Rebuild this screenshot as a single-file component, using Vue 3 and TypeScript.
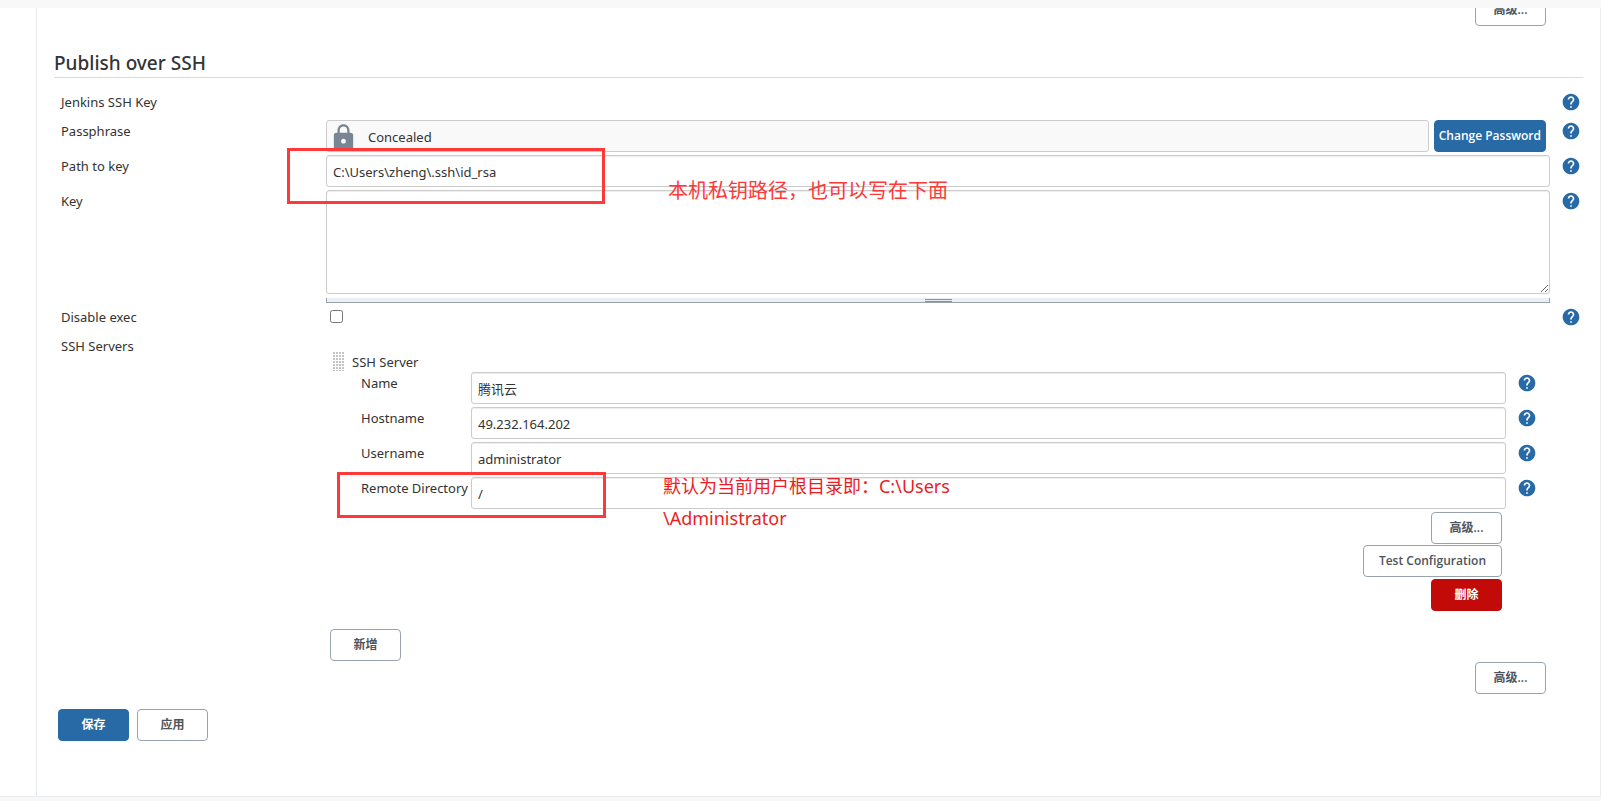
<script setup lang="ts">
import { reactive, ref } from 'vue'

interface ServerField {
  id: string
  label: string
  value: string
  marked?: boolean
}

const helpPath =
  'M12 2C6.48 2 2 6.48 2 12s4.48 10 10 10 10-4.48 10-10S17.52 2 12 2zm1 17h-2v-2h2v2zm2.07-7.75l-.9.92C13.45 12.9 13 13.5 13 15h-2v-.5c0-1.1.45-2.1 1.17-2.83l1.24-1.26c.37-.36.59-.86.59-1.41 0-1.1-.9-2-2-2s-2 .9-2 2H8c0-2.21 1.79-4 4-4s4 1.79 4 4c0 .88-.36 1.68-.93 2.25z'

const keyPath = ref('C:\\Users\\zheng\\.ssh\\id_rsa')
const key = ref('')
const disableExec = ref(false)

const serverFields = reactive<ServerField[]>([
  { id: 'server-name', label: 'Name', value: '腾讯云' },
  { id: 'server-hostname', label: 'Hostname', value: '49.232.164.202' },
  { id: 'server-username', label: 'Username', value: 'administrator' },
  { id: 'server-remote', label: 'Remote Directory', value: '/', marked: true },
])
</script>

<template>
  <div class="page">
    <header class="topbar"></header>
    <main class="main">
      <form class="config" @submit.prevent>
        <div class="actions previous">
          <button type="button" class="btn">高级...</button>
        </div>

        <h2 class="title">Publish over SSH</h2>

        <div class="row short">
          <span class="label">Jenkins SSH Key</span>
          <div></div>
          <button type="button" class="help" aria-label="Jenkins SSH Key">
            <svg viewBox="0 0 24 24"><path :d="helpPath" /></svg>
          </button>
        </div>

        <div class="row">
          <span class="label">Passphrase</span>
          <div class="secret">
            <div class="concealed">
              <svg class="lock" viewBox="0 0 24 24">
                <path
                  d="M18 8h-1V6c0-2.76-2.24-5-5-5S7 3.24 7 6v2H6c-1.1 0-2 .9-2 2v10c0 1.1.9 2 2 2h12c1.1 0 2-.9 2-2V10c0-1.1-.9-2-2-2zm-6 9c-1.1 0-2-.9-2-2s.9-2 2-2 2 .9 2 2-.9 2-2 2zm3.1-9H8.9V6c0-1.71 1.39-3.1 3.1-3.1 1.71 0 3.1 1.39 3.1 3.1v2z"
                />
              </svg>
              <span>Concealed</span>
            </div>
            <button type="button" class="btn primary compact">Change Password</button>
          </div>
          <button type="button" class="help" aria-label="Passphrase">
            <svg viewBox="0 0 24 24"><path :d="helpPath" /></svg>
          </button>
        </div>

        <div class="row">
          <label class="label" for="key-path">Path to key</label>
          <div class="control">
            <input id="key-path" v-model="keyPath" class="field" type="text" />
            <div class="mark mark-path"></div>
            <p class="note note-path">本机私钥路径，也可以写在下面</p>
          </div>
          <button type="button" class="help" aria-label="Path to key">
            <svg viewBox="0 0 24 24"><path :d="helpPath" /></svg>
          </button>
        </div>

        <div class="row tall">
          <label class="label" for="key">Key</label>
          <div>
            <textarea id="key" v-model="key" class="field area"></textarea>
            <div class="resizer"><span class="grip"></span></div>
          </div>
          <button type="button" class="help" aria-label="Key">
            <svg viewBox="0 0 24 24"><path :d="helpPath" /></svg>
          </button>
        </div>

        <div class="row short">
          <label class="label" for="disable-exec">Disable exec</label>
          <div><input id="disable-exec" v-model="disableExec" class="check" type="checkbox" /></div>
          <button type="button" class="help" aria-label="Disable exec">
            <svg viewBox="0 0 24 24"><path :d="helpPath" /></svg>
          </button>
        </div>

        <div class="row wide">
          <span class="label">SSH Servers</span>
          <div class="servers">
            <div class="server-head">
              <span class="drag"></span>
              <span>SSH Server</span>
            </div>
            <div class="server">
              <div v-for="f in serverFields" :key="f.id" class="server-row">
                <label class="server-label" :for="f.id">{{ f.label }}</label>
                <div class="control">
                  <input :id="f.id" v-model="f.value" class="field" type="text" />
                  <template v-if="f.marked">
                    <div class="mark mark-remote"></div>
                    <p class="note note-remote">默认为当前用户根目录即：C:\Users<br />\Administrator</p>
                  </template>
                </div>
                <button type="button" class="help" :aria-label="f.label">
                  <svg viewBox="0 0 24 24"><path :d="helpPath" /></svg>
                </button>
              </div>
              <div class="actions stacked">
                <button type="button" class="btn">高级...</button>
                <button type="button" class="btn">Test Configuration</button>
                <button type="button" class="btn danger">删除</button>
              </div>
            </div>
            <button type="button" class="btn add">新增</button>
          </div>
        </div>

        <div class="actions">
          <button type="button" class="btn">高级...</button>
        </div>

        <div class="footer-actions">
          <button type="submit" class="btn primary">保存</button>
          <button type="button" class="btn">应用</button>
        </div>
      </form>
    </main>
    <footer class="bottombar"></footer>
  </div>
</template>

<style>
body {
  margin: 0;
}
</style>

<style scoped>
.page {
  box-sizing: border-box;
  min-height: 100vh;
  display: flex;
  flex-direction: column;
  background: #fff;
  color: #333;
  font-family: 'Noto Sans', 'Noto Sans CJK SC', sans-serif;
  font-size: 13px;
  line-height: 22px;
}
.page * {
  box-sizing: border-box;
}
.topbar {
  height: 8px;
  background: #f8f8f8;
}
.bottombar {
  height: 5px;
  background: #f8f8f8;
  border-top: 1px solid #e9ecef;
}
.main {
  flex: 1;
  margin-left: 36px;
  padding: 0 17px;
  border-left: 1px solid #e6eaef;
  border-right: 1px solid #eee;
  overflow: hidden;
}
.actions {
  display: flex;
  justify-content: flex-end;
  padding-right: 37px;
}
.previous {
  margin-top: -14px;
}
.stacked {
  flex-direction: column;
  align-items: flex-end;
  gap: 1px;
}
.title {
  margin: 23px 0 13px;
  border-bottom: 1px solid #dcdcdc;
  font-size: 19px;
  font-weight: 500;
  line-height: 28px;
}
.row {
  display: grid;
  grid-template-columns: 272px minmax(0, 1fr) 33px;
  align-items: start;
  min-height: 35px;
}
.short {
  min-height: 29px;
}
.tall {
  min-height: 116px;
}
.wide {
  grid-template-columns: 272px minmax(0, 1fr);
}
.label {
  padding-left: 7px;
}
.help {
  justify-self: end;
  display: flex;
  align-items: center;
  height: 22px;
  margin: 0 2px 0 0;
  padding: 0;
  border: 0;
  background: none;
  cursor: pointer;
}
.help svg {
  width: 20px;
  height: 20px;
  fill: #286aa5;
}
.control {
  position: relative;
}
.field {
  display: block;
  width: 100%;
  height: 32px;
  margin: 0;
  padding: 1px 6px 0;
  border: 1px solid #ccc;
  border-radius: 3px;
  background: #fff;
  box-shadow: inset 0 1px 1px rgba(0, 0, 0, 0.075);
  color: #333;
  font: inherit;
}
.area {
  height: 104px;
  resize: vertical;
}
.resizer {
  display: flex;
  justify-content: center;
  height: 5px;
  margin-top: 4px;
  border: solid #98a3ad;
  border-width: 0 1px 1px;
  background: #eaeff2;
}
.grip {
  width: 27px;
  height: 3px;
  margin-top: 1px;
  border: solid #8a8f8f;
  border-width: 1px 0;
  background: #eaeff2;
}
.secret {
  display: flex;
  gap: 5px;
  padding-right: 4px;
}
.concealed {
  flex: 1;
  display: flex;
  align-items: center;
  gap: 10px;
  height: 32px;
  padding: 2px 2px 0;
  border: 1px solid #ccc;
  border-radius: 3px;
  background: #f9f9f9;
}
.lock {
  width: 29px;
  height: 29px;
  fill: #788594;
}
.check {
  display: block;
  width: 13px;
  height: 13px;
  margin: 4px 0 0 4px;
}
.servers {
  padding-top: 16px;
}
.server-head {
  display: flex;
  align-items: flex-start;
  gap: 7px;
  padding-left: 7px;
  height: 21px;
}
.drag {
  width: 12px;
  height: 19px;
  margin-top: 1px;
  background: linear-gradient(90deg, transparent 2px, #fff 2px) 0 0 / 3px 3px,
    linear-gradient(#c4c4c4 2px, #fff 2px) 0 0 / 3px 3px;
}
.server {
  margin: 0 44px 0 35px;
}
.server-row {
  display: grid;
  grid-template-columns: 110px minmax(0, 1fr) 33px;
  align-items: start;
  min-height: 35px;
}
.server-label {
  white-space: nowrap;
}
.btn {
  min-width: 71px;
  height: 32px;
  margin: 0;
  padding: 0 15px;
  border: 1px solid #98a3ad;
  border-radius: 4px;
  background: #fff;
  color: #4d545d;
  font-family: 'Open Sans', 'Noto Sans CJK SC', sans-serif;
  font-size: 12px;
  font-weight: 600;
  line-height: 20px;
  white-space: nowrap;
  cursor: pointer;
}
.compact {
  padding: 0 4px;
}
.primary {
  border-color: #286aa5;
  background: #286aa5;
  color: #fff;
}
.danger {
  border-color: #c20a08;
  background: #c20a08;
  color: #fff;
}
.stacked .danger {
  margin-top: 1px;
}
.add {
  display: block;
  margin: 18px 0 1px 4px;
}
.footer-actions {
  display: flex;
  gap: 8px;
  padding: 15px 4px 50px;
}
.mark {
  position: absolute;
  border: 3px solid #ff3838;
  pointer-events: none;
  z-index: 1;
}
.mark-path {
  left: -39px;
  top: -7px;
  width: 318px;
  height: 56px;
}
.mark-remote {
  left: -134px;
  top: -5px;
  width: 269px;
  height: 46px;
}
.note {
  position: absolute;
  z-index: 1;
  margin: 0;
  white-space: nowrap;
  pointer-events: none;
}
.note-path {
  left: 342px;
  top: 20px;
  color: #ff3838;
  font-size: 20px;
  line-height: 32px;
}
.note-remote {
  left: 192px;
  top: -7px;
  color: #ed1c24;
  font-size: 18px;
  line-height: 32px;
}
</style>
